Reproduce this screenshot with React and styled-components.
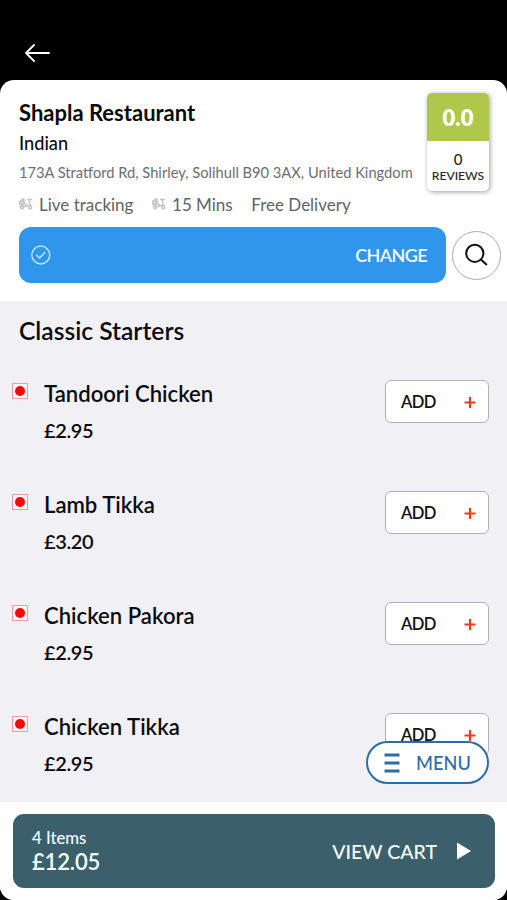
import React from "react";
import styled, { createGlobalStyle } from "styled-components";

const GlobalStyle = createGlobalStyle`
  *, *::before, *::after { box-sizing: border-box; }
  body { margin: 0; background: #000; }
  button { font: inherit; cursor: pointer; }
`;

const Screen = styled.div`
  position: relative;
  display: flex;
  flex-direction: column;
  width: 507px;
  height: 900px;
  overflow: hidden;
  background: #000;
  color: #0b0c0e;
  font-family: Lato, "Open Sans", sans-serif;
  font-weight: 500;
  white-space: nowrap;
`;

const TopBar = styled.header`
  display: flex;
  align-items: flex-start;
  height: 80px;
  flex: none;
  padding: 43px 0 0 24px;
`;

const IconButton = styled.button`
  display: flex;
  padding: 0;
  border: 0;
  background: none;
  color: #fff;
`;

const Sheet = styled.main`
  display: flex;
  flex-direction: column;
  flex: 1;
  min-height: 0;
  overflow: hidden;
  border-radius: 14px;
  background: #fff;
`;

const Summary = styled.section`
  height: 221px;
  flex: none;
  padding: 13px 6px 0 19px;
`;

const SummaryTop = styled.div`
  display: flex;
  justify-content: space-between;
  height: 134px;
  padding-right: 12px;
`;

const Details = styled.div`
  display: flex;
  flex-direction: column;
`;

const Name = styled.h1`
  margin: 5px 0 0;
  font-size: 22px;
  line-height: 30px;
  font-weight: 700;
`;

const Cuisine = styled.div`
  font-size: 18.2px;
  line-height: 30px;
`;

const Address = styled.div`
  width: 0;
  font-size: 14.68px;
  line-height: 29px;
  color: #6d6e70;
  font-weight: 400;
`;

const Meta = styled.div`
  display: flex;
  align-items: center;
  height: 34px;
  font-size: 17px;
  font-weight: 400;
  color: #626365;
`;

const MetaItem = styled.span`
  display: flex;
  align-items: center;
  gap: 6px;
  margin-right: 18.6px;
`;

const Rating = styled.aside`
  display: flex;
  flex-direction: column;
  flex: none;
  width: 62px;
  height: 98px;
  overflow: hidden;
  border-radius: 5px;
  background: #fff;
  box-shadow: 1px 1px 5px rgba(0, 0, 0, 0.38);
  text-align: center;
`;

const Score = styled.div`
  height: 48px;
  background: #afc74a;
  color: #fff;
  font-size: 22px;
  line-height: 50px;
  font-weight: 800;
`;

const Reviews = styled.div`
  padding-top: 10px;
  font-size: 12.2px;
  line-height: 16px;
  letter-spacing: -0.05px;
  color: #252628;
`;

const ReviewCount = styled.div`
  font-size: 15px;
  line-height: 17px;
`;

const Actions = styled.div`
  display: flex;
  align-items: center;
  gap: 6px;
`;

const ChangeBar = styled.button`
  display: flex;
  align-items: center;
  justify-content: space-between;
  width: 427px;
  height: 56px;
  padding: 0 19px 0 12px;
  border: 0;
  border-radius: 12px;
  background: #3096eb;
  color: #f4faff;
  font-size: 18px;
  font-weight: 600;
  letter-spacing: -0.6px;
`;

const SearchButton = styled.button`
  display: flex;
  align-items: center;
  justify-content: center;
  width: 49px;
  height: 49px;
  padding: 0;
  border: 1px solid #aaa;
  border-radius: 50%;
  background: #fff;
  color: #111;
`;

const MenuList = styled.section`
  height: 501px;
  flex: none;
  overflow: hidden;
  background: #f0f0f5;
`;

const SectionTitle = styled.h2`
  height: 79px;
  margin: 0;
  padding: 14px 0 0 19px;
  font-size: 24.6px;
  line-height: 32px;
  font-weight: 600;
`;

const Dish = styled.article`
  display: flex;
  align-items: flex-start;
  height: 111px;
  padding: 0 18px 0 12px;
`;

const DishMark = styled.span`
  display: flex;
  align-items: center;
  justify-content: center;
  width: 16px;
  height: 16px;
  margin-top: 3px;
  border: 1px solid #f49a9d;
  background: #faf6fa;

  &::before {
    content: "";
    width: 10px;
    height: 10px;
    border-radius: 50%;
    background: #fc0509;
  }
`;

const DishText = styled.div`
  flex: 1;
  padding-left: 16px;
`;

const DishName = styled.h3`
  margin: 0;
  font-size: 22.1px;
  line-height: 28px;
  font-weight: 600;
`;

const Price = styled.div`
  margin-top: 8px;
  font-size: 20px;
  line-height: 28px;
  font-weight: 600;
  letter-spacing: -0.4px;
`;

const AddButton = styled.button`
  display: flex;
  align-items: center;
  justify-content: space-between;
  width: 104px;
  height: 43px;
  padding: 0 12px 0 15px;
  border: 1px solid #b1b1b5;
  border-radius: 6px;
  background: #fff;
  color: #111;
  font-size: 16.6px;
  font-weight: 600;
  letter-spacing: -0.6px;
`;

const MenuButton = styled.button`
  position: absolute;
  left: 366px;
  top: 741px;
  display: flex;
  align-items: center;
  gap: 16px;
  width: 123px;
  height: 43px;
  padding: 0 0 0 16px;
  border: 2px solid #2c6da8;
  border-radius: 22px;
  background: #fff;
  color: #2c6da8;
  font-size: 18.2px;
`;

const CartArea = styled.footer`
  flex: 1;
  padding: 12px 12px 0 13px;
  background: #fff;
`;

const Cart = styled.button`
  display: flex;
  align-items: center;
  justify-content: space-between;
  width: 482px;
  height: 74px;
  padding: 0 24px 0 19px;
  border: 0;
  border-radius: 11px;
  background: #3b606c;
  color: #f6feff;
  text-align: left;
`;

const CartCount = styled.div`
  font-size: 16.7px;
  line-height: 22px;
`;

const CartTotal = styled.div`
  font-size: 22px;
  line-height: 26px;
  font-weight: 600;
  letter-spacing: -0.15px;
`;

const ViewCart = styled.div`
  display: flex;
  align-items: center;
  gap: 20px;
  font-size: 19.5px;
`;

const BackIcon = () => (
  <svg width="27" height="20" viewBox="0 0 27 20" fill="none" stroke="currentColor" strokeWidth="1.8" strokeLinecap="round" strokeLinejoin="round">
    <path d="M25 10H2M10 2 2 10l8 8" />
  </svg>
);

const ScooterIcon = () => (
  <svg width="14" height="12" viewBox="0 0 14 12" fill="none" stroke="#c4c4c4" strokeWidth="1.4">
    <rect x=".8" y="3" width="4" height="3.4" fill="#dcdcdc" />
    <circle cx="4" cy="2" r="1.2" />
    <path d="M8 1.5h5M10.5 1.5v3l1.5 4M5 4.5l2.5 3h3M.8 8.5h7" />
    <circle cx="3" cy="9.3" r="1.5" />
    <circle cx="11.2" cy="9.3" r="1.5" />
  </svg>
);

const CheckIcon = () => (
  <svg width="20" height="20" viewBox="0 0 20 20" fill="none" stroke="#c3e6ff" strokeWidth="1.4" strokeLinecap="round" strokeLinejoin="round">
    <circle cx="9.8" cy="10" r="9" />
    <path d="m5.6 10.2 3 2.7 5.2-5.4" />
  </svg>
);

const SearchIcon = () => (
  <svg width="24" height="24" viewBox="0 0 24 24" fill="none" stroke="currentColor" strokeWidth="2">
    <circle cx="9.8" cy="10.3" r="8.6" />
    <path d="m15.9 16.5 6 5.6" />
  </svg>
);

const PlusIcon = () => (
  <svg width="12" height="12" viewBox="0 0 12 12" stroke="#f23b1d" strokeWidth="2.2">
    <path d="M6 1v11M.5 6.5h11" />
  </svg>
);

const BarsIcon = () => (
  <svg width="16" height="20" viewBox="0 0 16 20" stroke="currentColor" strokeWidth="2.8">
    <path d="M.5 2h15M.5 10h15M.5 18h15" />
  </svg>
);

const PlayIcon = () => (
  <svg width="14" height="18" viewBox="0 0 14 18" fill="#fff">
    <path d="M0 .5v17L14 9z" />
  </svg>
);

const dishes = [
  { name: "Tandoori Chicken", price: "£2.95" },
  { name: "Lamb Tikka", price: "£3.20" },
  { name: "Chicken Pakora", price: "£2.95" },
  { name: "Chicken Tikka", price: "£2.95" },
];

export default function App() {
  return (
    <Screen>
      <GlobalStyle />
      <TopBar>
        <IconButton aria-label="Back"><BackIcon /></IconButton>
      </TopBar>
      <Sheet>
        <Summary>
          <SummaryTop>
            <Details>
              <Name>Shapla Restaurant</Name>
              <Cuisine>Indian</Cuisine>
              <Address>173A Stratford Rd, Shirley, Solihull B90 3AX, United Kingdom</Address>
              <Meta>
                <MetaItem><ScooterIcon />Live tracking</MetaItem>
                <MetaItem><ScooterIcon />15 Mins</MetaItem>
                <MetaItem>Free Delivery</MetaItem>
              </Meta>
            </Details>
            <Rating>
              <Score>0.0</Score>
              <Reviews><ReviewCount>0</ReviewCount>REVIEWS</Reviews>
            </Rating>
          </SummaryTop>
          <Actions>
            <ChangeBar><CheckIcon />CHANGE</ChangeBar>
            <SearchButton aria-label="Search"><SearchIcon /></SearchButton>
          </Actions>
        </Summary>
        <MenuList>
          <SectionTitle>Classic Starters</SectionTitle>
          {dishes.map((dish) => (
            <Dish key={dish.name}>
              <DishMark />
              <DishText>
                <DishName>{dish.name}</DishName>
                <Price>{dish.price}</Price>
              </DishText>
              <AddButton>ADD<PlusIcon /></AddButton>
            </Dish>
          ))}
        </MenuList>
        <CartArea>
          <Cart>
            <div>
              <CartCount>4 Items</CartCount>
              <CartTotal>£12.05</CartTotal>
            </div>
            <ViewCart>VIEW CART<PlayIcon /></ViewCart>
          </Cart>
        </CartArea>
      </Sheet>
      <MenuButton><BarsIcon />MENU</MenuButton>
    </Screen>
  );
}
